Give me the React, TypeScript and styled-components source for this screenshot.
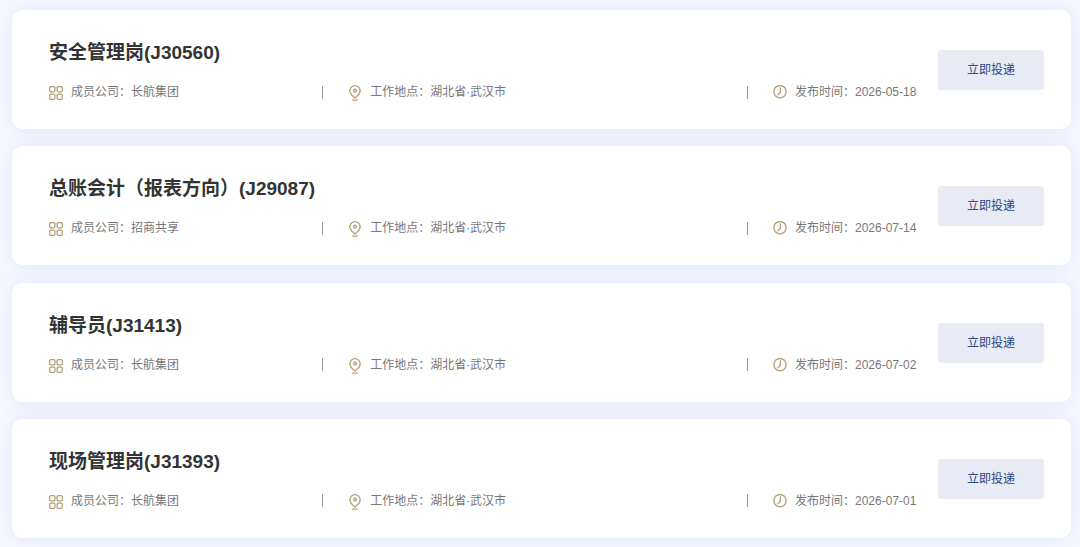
import React from 'react';
import styled, { createGlobalStyle } from 'styled-components';

const GlobalStyle = createGlobalStyle`
  *, *::before, *::after { box-sizing: border-box; }
  body {
    margin: 0;
    background: #f6f8ff;
    font-family: "Liberation Sans", "Noto Sans CJK SC", sans-serif;
  }
`;

const JobList = styled.ul`
  display: flex;
  flex-direction: column;
  justify-content: space-between;
  gap: 16px;
  min-height: 100vh;
  margin: 0;
  padding: 10px 9px 9px 12px;
  list-style: none;
  overflow: hidden;
`;

const JobCard = styled.li`
  display: flex;
  align-items: center;
  gap: 16px;
  padding: 28px 27px 27px 37px;
  border-radius: 10px;
  background: #fff;
  box-shadow: 0 0 20px rgba(77, 108, 208, 0.12);
`;

const JobInfo = styled.div`
  flex: 1;
  min-width: 0;
`;

const JobTitle = styled.h2`
  margin: 0 0 14px;
  color: #333;
  font-size: 19px;
  font-weight: 700;
  line-height: 30px;
`;

const MetaRow = styled.div`
  display: grid;
  grid-template-columns: minmax(0, 9fr) minmax(0, 14fr) 175px;
  align-items: center;
`;

const MetaItem = styled.div<{ $divided?: boolean }>`
  display: flex;
  align-items: center;
  gap: 8px;
  color: #777;
  font-size: 12px;
  line-height: 20px;
  white-space: nowrap;

  &::before {
    content: "";
    display: ${(p) => (p.$divided ? 'block' : 'none')};
    width: 1px;
    height: 13px;
    margin-right: 17px;
    background: #999;
  }
`;

const Icon = styled.svg`
  flex: none;
  width: 14px;
  height: 16px;
  margin-top: 2px;
  fill: none;
  stroke: #b59e77;
  stroke-width: 1.3;
  stroke-linecap: round;
  stroke-linejoin: round;
`;

const ApplyButton = styled.button`
  flex: none;
  width: 106px;
  height: 40px;
  padding: 0;
  border: 0;
  border-radius: 3px;
  background: #e8ebf3;
  color: #2b4a86;
  font-family: inherit;
  font-size: 12px;
  line-height: 20px;
  cursor: pointer;
`;

const CompanyIcon = () => (
  <Icon viewBox="0 0 14 16" aria-hidden="true">
    <rect x="0.7" y="1.7" width="5.2" height="5.2" rx="1.2" />
    <rect x="8.1" y="1.7" width="5.2" height="5.2" rx="1.2" />
    <rect x="0.7" y="9.1" width="5.2" height="5.2" rx="1.2" />
    <rect x="8.1" y="9.1" width="5.2" height="5.2" rx="1.2" />
  </Icon>
);

const PlaceIcon = () => (
  <Icon viewBox="0 0 14 16" aria-hidden="true">
    <path d="M7 13C4.6 11 1.8 8.8 1.8 5.9a5.2 5.2 0 0 1 10.4 0C12.2 8.8 9.4 11 7 13Z" />
    <circle cx="7" cy="5.6" r="1.4" />
    <path d="M4.6 15.1h4.8" />
  </Icon>
);

const TimeIcon = () => (
  <Icon viewBox="0 0 14 16" aria-hidden="true">
    <circle cx="7" cy="6.7" r="6.2" />
    <path d="M7.4 3v4.1L4.9 9.8" />
  </Icon>
);

interface Job {
  title: string;
  code: string;
  company: string;
  place: string;
  date: string;
}

const jobs: Job[] = [
  { title: '安全管理岗', code: 'J30560', company: '长航集团', place: '湖北省·武汉市', date: '2026-05-18' },
  { title: '总账会计（报表方向）', code: 'J29087', company: '招商共享', place: '湖北省·武汉市', date: '2026-07-14' },
  { title: '辅导员', code: 'J31413', company: '长航集团', place: '湖北省·武汉市', date: '2026-07-02' },
  { title: '现场管理岗', code: 'J31393', company: '长航集团', place: '湖北省·武汉市', date: '2026-07-01' },
];

export default function App() {
  return (
    <>
      <GlobalStyle />
      <JobList>
        {jobs.map((job) => (
          <JobCard key={job.code}>
            <JobInfo>
              <JobTitle>{`${job.title}(${job.code})`}</JobTitle>
              <MetaRow>
                <MetaItem>
                  <CompanyIcon />
                  <span>{`成员公司：${job.company}`}</span>
                </MetaItem>
                <MetaItem $divided>
                  <PlaceIcon />
                  <span>{`工作地点：${job.place}`}</span>
                </MetaItem>
                <MetaItem $divided>
                  <TimeIcon />
                  <span>{`发布时间：${job.date}`}</span>
                </MetaItem>
              </MetaRow>
            </JobInfo>
            <ApplyButton type="button">立即投递</ApplyButton>
          </JobCard>
        ))}
      </JobList>
    </>
  );
}
